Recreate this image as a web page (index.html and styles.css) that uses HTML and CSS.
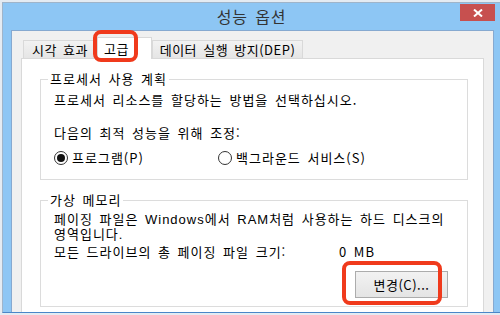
FILE: index.html
```html
<!DOCTYPE html>
<html lang="ko">
<head>
<meta charset="UTF-8">
<title>성능 옵션</title>
<link rel="stylesheet" href="styles.css">
</head>
<body>

<div class="window">
    <div class="titlebar">
        <span></span>
        <span class="title">성능 옵션</span>
        <span class="close-btn">
            <svg width="10" height="8" viewBox="0 0 10 8">
                <path d="M1 0.5 L9 7.5 M9 0.5 L1 7.5" stroke="#fff" stroke-width="2" fill="none"/>
            </svg>
        </span>
    </div>

    <div class="client">
        <div class="tabs">
            <div class="tab tab-visual">시각 효과</div>
            <div class="tab tab-advanced active">고급<span class="mark mark-tab"></span></div>
            <div class="tab tab-dep">데이터 실행 방지(DEP)</div>
        </div>

        <div class="panel">
            <fieldset class="group group-cpu">
                <legend>프로세서 사용 계획</legend>
                <p class="line first">프로세서 리소스를 할당하는 방법을 선택하십시오.</p>
                <p class="line adjust">다음의 최적 성능을 위해 조정:</p>
                <div class="radios">
                    <label class="radio checked"><span class="dot"></span>프로그램(P)</label>
                    <label class="radio"><span class="dot"></span>백그라운드 서비스(S)</label>
                </div>
            </fieldset>

            <fieldset class="group group-mem">
                <legend>가상 메모리</legend>
                <p class="desc">페이징 파일은 Windows에서 RAM처럼 사용하는 하드 디스크의<br>영역입니다.</p>
                <div class="size-row">
                    <span class="size-label">모든 드라이브의 총 페이징 파일 크기:</span>
                    <span>0 MB</span>
                </div>
                <div class="button-row">
                    <span class="button-wrap">
                        <button>변경(C)...</button>
                        <span class="mark mark-btn"></span>
                    </span>
                </div>
            </fieldset>
        </div>
    </div>
</div>

</body>
</html>
```

FILE: styles.css
```css
* {
    box-sizing: border-box;
}
body {
    margin: 0;
    width: 500px;
    height: 315px;
    overflow: hidden;
    background-color: #e4ebf2;
    font-family: "Noto Sans CJK KR", "Noto Sans", sans-serif;
    font-size: 13px;
    letter-spacing: 1px;
    word-spacing: 2px;
    color: #000;
}
.window {
    margin: 2px 0 0 2px;
    height: 311px;
    background-color: #8dc6f4;
    border-top: 1px solid #9fb4c9;
    border-left: 1px solid #9fb4c9;
    border-bottom: 1px solid #4a86c8;
    overflow: hidden;
}
.titlebar {
    height: 27px;
    display: grid;
    grid-template-columns: 1fr auto 1fr;
    align-items: start;
}
.title {
    font-size: 16px;
    line-height: 27px;
    letter-spacing: 0.8px;
    color: #333;
}
.close-btn {
    justify-self: end;
    width: 35px;
    height: 17px;
    margin: 1px 5px 0 0;
    background-color: #c7504f;
    display: flex;
    align-items: center;
    justify-content: center;
}
.client {
    margin: 0 6px 0 8px;
    height: 290px;
    padding: 6px 9px 0 9px;
    background-color: #f0f0f0;
    border: 1px solid #86a9d0;
    border-bottom: none;
}
.tabs {
    display: flex;
    align-items: flex-end;
    height: 22px;
    padding-left: 2px;
    margin-bottom: -1px;
    position: relative;
    z-index: 1;
    letter-spacing: 0.5px;
}
.tab {
    position: relative;
    height: 18px;
    margin-bottom: 1px;
    padding: 0 6px;
    line-height: 17px;
    text-align: center;
    white-space: nowrap;
    background: linear-gradient(#f2f2f2, #e5e5e5);
    border: 1px solid #d9d9d9;
    border-bottom: none;
}
.tab-visual {
    width: 74px;
}
.tab-advanced {
    width: 55px;
}
.tab-dep {
    width: 151px;
}
.tab.active {
    height: 22px;
    margin-bottom: 0;
    padding-top: 2px;
    text-align: left;
    background: #fff;
}
.panel {
    height: 260px;
    padding: 13px 15px 0 18px;
    background-color: #fff;
    border: 1px solid #d9d9d9;
}
.group {
    margin: 0;
    min-width: 0;
    padding: 0 12px 13px 13px;
    border: 1px solid #dcdcdc;
}
.group legend {
    margin-left: -6px;
    padding: 0 2px;
    line-height: 14px;
}
.line {
    margin: 0;
    line-height: 16px;
}
.first {
    padding-top: 6px;
}
.adjust {
    margin-top: 17px;
}
.radios {
    display: flex;
    margin-top: 9px;
    line-height: 16px;
}
.radio {
    display: flex;
    align-items: center;
}
.radio:first-child {
    width: 164px;
}
.dot {
    width: 14px;
    height: 14px;
    margin-right: 4px;
    border: 1px solid #333;
    border-radius: 50%;
    background-color: #fff;
    display: flex;
    align-items: center;
    justify-content: center;
}
.checked .dot::after {
    content: "";
    width: 8px;
    height: 8px;
    border-radius: 50%;
    background-color: #111;
}
.group-mem {
    margin-top: 13px;
    padding-bottom: 8px;
}
.desc {
    margin: 0;
    padding-top: 5px;
    font-family: "Liberation Sans", "Noto Sans CJK KR", sans-serif;
    line-height: 15px;
}
.size-row {
    display: flex;
    margin-top: 2px;
    line-height: 16px;
}
.size-label {
    width: 285px;
}
.button-row {
    display: flex;
    justify-content: flex-end;
    margin-top: 11px;
    padding-right: 7px;
}
.button-wrap {
    position: relative;
    display: flex;
}
button {
    width: 93px;
    height: 27px;
    padding: 0;
    font: inherit;
    letter-spacing: 0.5px;
    color: #000;
    background: linear-gradient(#f2f2f2, #e4e4e4);
    border: 1px solid #acacac;
}
.mark {
    position: absolute;
    border: 4px solid #f03a1c;
    border-radius: 8px;
    pointer-events: none;
}
.mark-tab {
    left: -5px;
    top: -8px;
    width: 45px;
    height: 32px;
}
.mark-btn {
    left: -13px;
    top: -10px;
    width: 100px;
    height: 44px;
}
```
